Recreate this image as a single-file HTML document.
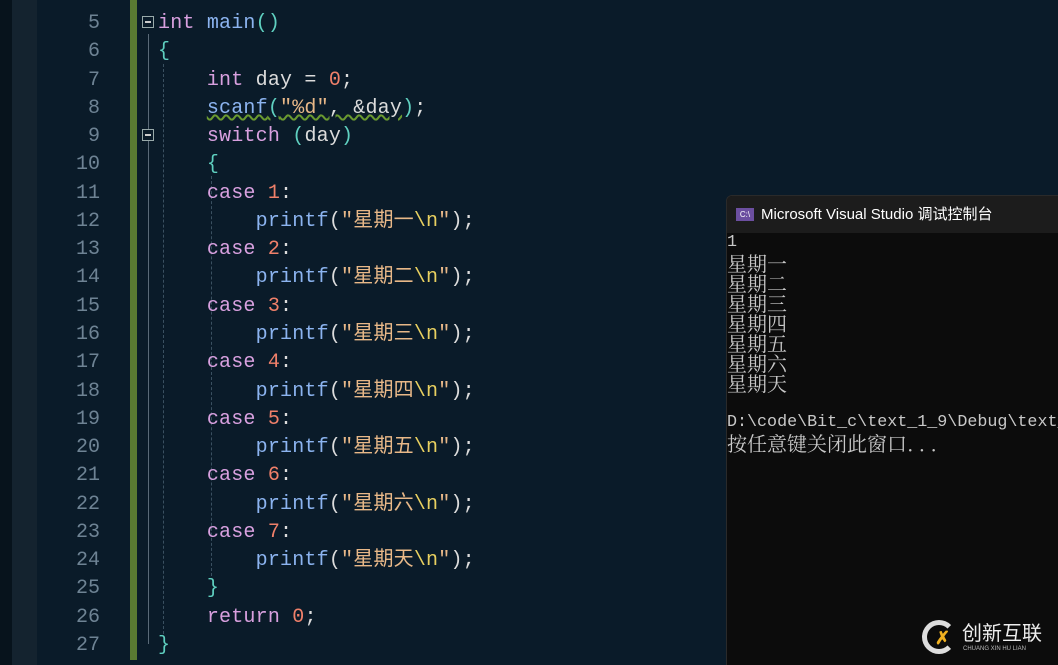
<!DOCTYPE html><html><head><meta charset="utf-8"><style>
html,body{margin:0;width:1058px;height:665px;overflow:hidden}
body{background:#0a1b29;position:relative;font-family:"Liberation Mono","Noto Sans CJK SC",monospace}
.s1{position:absolute;left:0;top:0;width:12px;height:665px;background:#07131c}
.s2{position:absolute;left:12px;top:0;width:25px;height:665px;background:#14232f}
.g{position:absolute;left:130px;top:0;width:7px;height:660px;background:#5a7a32}
.ln{position:absolute;left:50px;width:50px;text-align:right;color:#6e8394;font-size:20px;line-height:24px;height:24px}
.c{position:absolute;left:158px;white-space:pre;font-size:20px;color:#dcdcdc;letter-spacing:0.2px;line-height:24px;height:24px}
.c span{line-height:24px}
.k{color:#d8a0df}.f{color:#8cb4f0}.s{color:#e8b888}.n{color:#f0806a}.b{color:#5fd0c0}
.con{position:absolute;left:726px;top:195px;width:340px;height:480px;background:#0c0c0c;border:1px solid #2a2a2a;border-radius:6px 0 0 0;overflow:hidden}
.tb{height:37px;background:#1c1c1c;color:#fff;font-family:"Liberation Sans","Noto Sans CJK SC",sans-serif;font-size:15px;line-height:37px;padding-left:34px;position:relative}
.ic{position:absolute;left:9px;top:12px;width:18px;height:13px;background:#6c4fa0;font-size:8px;line-height:13px;color:#fff;text-align:center}
.ct{position:absolute;left:0;top:37px;color:#c8c8c8;font-family:"Noto Serif CJK SC",serif;font-size:20px;white-space:pre}
.ct div{height:20px;line-height:20px}
.ct .a{font-family:"Liberation Mono",monospace;font-size:16.7px}
.fold{position:absolute;width:10px;height:10px;border:1px solid #9aa;left:142px}
.fold:after{content:"";position:absolute;left:2px;top:4px;width:6px;height:1.5px;background:#ccc}
.gl{position:absolute;border-left:1px dashed #3a5060}
</style></head><body>
<div class="s1"></div><div class="s2"></div><div class="g"></div>
<div class="gl" style="left:148px;top:34px;height:610px;border-left:1px solid #5a6a78"></div>
<div class="gl" style="left:163px;top:64px;height:570px"></div>
<div class="gl" style="left:211px;top:176px;height:400px"></div>
<div class="fold" style="top:16px;background:#0a1b29"></div>
<div class="fold" style="top:129px;background:#0a1b29"></div>
<div id="code"></div>
<div class="con"><div class="tb"><div class="ic">C:\</div>Microsoft Visual Studio 调试控制台</div>
<div class="ct"><div class="a">1</div><div>星期一</div><div>星期二</div><div>星期三</div><div>星期四</div><div>星期五</div><div>星期六</div><div>星期天</div><div></div><div class="a">D:\code\Bit_c\text_1_9\Debug\text_</div><div>按任意键关闭此窗口. . .</div></div></div>
<div style="position:absolute;left:922px;top:620px;width:34px;height:34px;border-radius:50%;border:5px solid #ddd;box-sizing:border-box;border-right-color:transparent"></div>
<div style="position:absolute;left:935px;top:628px;color:#f0b020;font:bold 18px 'Liberation Sans';">✗</div>
<div style="position:absolute;left:962px;top:622px;color:#eee;font:20px 'Liberation Sans','Noto Sans CJK SC',sans-serif;line-height:24px">创新互联</div>
<div style="position:absolute;left:963px;top:646px;color:#bbb;font:6px 'Liberation Sans'">CHUANG XIN HU LIAN</div>
<script>
var L=[
[4,'<span style="color:#bbb">#include &lt;stdio.h&gt;</span>'],
[5,'<span class="k">int</span> <span class="f">main</span><span class="b">()</span>'],
[6,'<span class="b">{</span>'],
[7,'    <span class="k">int</span> day = <span class="n">0</span>;'],
[8,'    <span style="text-decoration:underline wavy #6a9a30"><span class="f">scanf</span><span class="b">(</span><span class="s">"%d"</span>, &amp;day</span><span class="b">)</span>;'],
[9,'    <span class="k">switch</span> <span class="b">(</span>day<span class="b">)</span>'],
[10,'    <span class="b">{</span>']];
var d=['一','二','三','四','五','六','天'];
for(var i=0;i<7;i++){L.push([11+2*i,'    <span class="k">case</span> <span class="n">'+(i+1)+'</span>:']);L.push([12+2*i,'        <span class="f">printf</span><span>(</span><span class="s">"星期'+d[i]+'<span style="color:#e8d060">\\n</span>"</span><span>)</span>;']);}
L.push([25,'    <span class="b">}</span>']);L.push([26,'    <span class="k">return</span> <span class="n">0</span>;']);L.push([27,'<span class="b">}</span>']);
var h='';L.forEach(function(l){var y=22+(l[0]-5)*28.27-10;h+='<div class="ln" style="top:'+y+'px">'+(l[0]==4?'':l[0])+'</div><div class="c" style="top:'+y+'px">'+l[1]+'</div>';});
document.getElementById('code').innerHTML=h;
</script>
</body></html>
